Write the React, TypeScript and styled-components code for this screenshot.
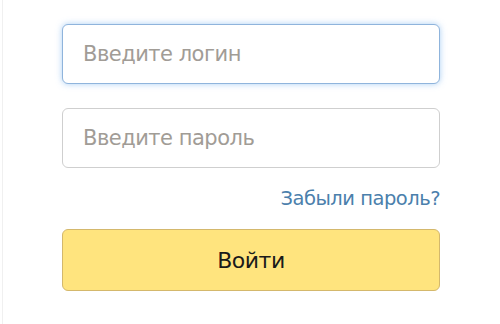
import React from "react";
import styled, { createGlobalStyle } from "styled-components";

const GlobalStyle = createGlobalStyle`
  html, body {
    margin: 0;
    padding: 0;
    background: #fff;
  }
  body {
    font-family: "DejaVu Sans", Tahoma, Verdana, sans-serif;
  }
`;

export default function App() {
  return (
    <Page>
      <GlobalStyle />
      <Form>
        <Field type="text" placeholder="Введите логин" $focused />
        <Field type="password" placeholder="Введите пароль" />
        <LinkRow>
          <Forgot href="#">Забыли пароль?</Forgot>
        </LinkRow>
        <Submit type="button">Войти</Submit>
      </Form>
    </Page>
  );
}

const Page = styled.div`
  height: 324px;
  margin-left: 2px;
  border-left: 1px solid #f0f0f0;
  padding: 24px 0 0 59px;
  box-sizing: border-box;
`;

const Form = styled.form`
  width: 378px;
  display: flex;
  flex-direction: column;
`;

const Field = styled.input<{ $focused?: boolean }>`
  height: 60px;
  box-sizing: border-box;
  margin-bottom: 24px;
  padding: 0 20px;
  border: 1px solid ${(p) => (p.$focused ? "#8fb4dc" : "#cfcfcf")};
  border-radius: 6px;
  box-shadow: ${(p) => (p.$focused ? "0 0 6px rgba(102, 168, 235, 0.55)" : "none")};
  font-family: inherit;
  font-size: 21px;
  letter-spacing: -0.5px;
  color: #333;
  outline: none;

  &::placeholder {
    color: #a19c96;
  }
`;

const LinkRow = styled.div`
  display: flex;
  justify-content: flex-end;
  margin-top: -5px;
  height: 42px;
`;

const Forgot = styled.a`
  font-size: 19.5px;
  letter-spacing: -0.5px;
  color: #4b80ac;
  text-decoration: none;
`;

const Submit = styled.button`
  height: 62px;
  border: 1px solid #d4b86c;
  border-radius: 6px;
  background: #ffe47e;
  font-family: inherit;
  font-size: 22px;
  letter-spacing: -0.5px;
  color: #1a1a1a;
  cursor: pointer;
`;
